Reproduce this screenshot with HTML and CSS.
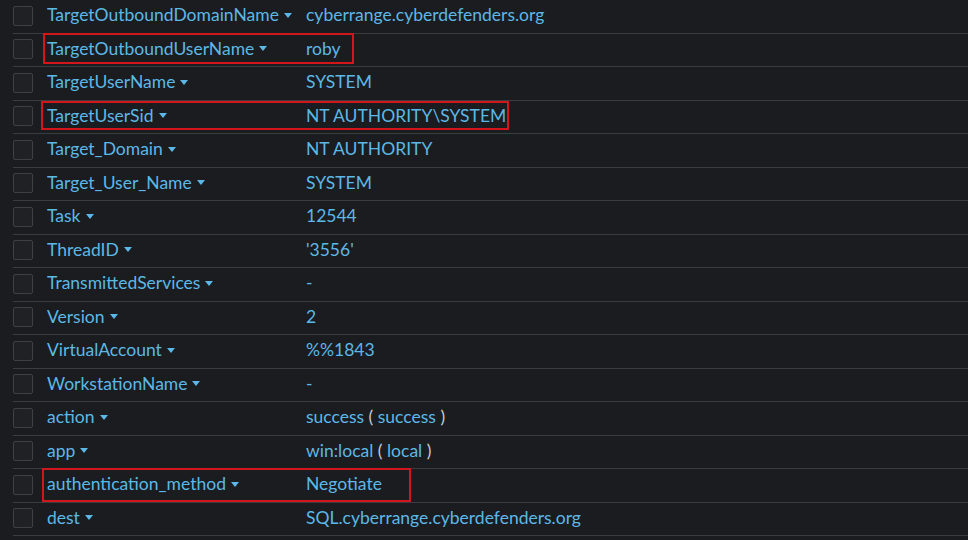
FILE: index.html
```html
<!DOCTYPE html>
<html>
<head>
<meta charset="utf-8">
<link rel="stylesheet" href="styles.css">
</head>
<body>
<div class="fields">
  <div class="row"><span class="cb"></span><span class="key">TargetOutboundDomainName<i class="caret"></i></span><span class="val">cyberrange.cyberdefenders.org</span></div>
  <div class="row"><span class="cb"></span><span class="key">TargetOutboundUserName<i class="caret"></i></span><span class="val">roby</span></div>
  <div class="row"><span class="cb"></span><span class="key">TargetUserName<i class="caret"></i></span><span class="val">SYSTEM</span></div>
  <div class="row"><span class="cb"></span><span class="key">TargetUserSid<i class="caret"></i></span><span class="val">NT AUTHORITY\SYSTEM</span></div>
  <div class="row"><span class="cb"></span><span class="key">Target_Domain<i class="caret"></i></span><span class="val">NT AUTHORITY</span></div>
  <div class="row"><span class="cb"></span><span class="key">Target_User_Name<i class="caret"></i></span><span class="val">SYSTEM</span></div>
  <div class="row"><span class="cb"></span><span class="key">Task<i class="caret"></i></span><span class="val">12544</span></div>
  <div class="row"><span class="cb"></span><span class="key">ThreadID<i class="caret"></i></span><span class="val">'3556'</span></div>
  <div class="row"><span class="cb"></span><span class="key">TransmittedServices<i class="caret"></i></span><span class="val">-</span></div>
  <div class="row"><span class="cb"></span><span class="key">Version<i class="caret"></i></span><span class="val">2</span></div>
  <div class="row"><span class="cb"></span><span class="key">VirtualAccount<i class="caret"></i></span><span class="val">%%1843</span></div>
  <div class="row"><span class="cb"></span><span class="key">WorkstationName<i class="caret"></i></span><span class="val">-</span></div>
  <div class="row"><span class="cb"></span><span class="key">action<i class="caret"></i></span><span class="val">success <span class="paren">(</span> success <span class="paren">)</span></span></div>
  <div class="row"><span class="cb"></span><span class="key">app<i class="caret"></i></span><span class="val">win:local <span class="paren">(</span> local <span class="paren">)</span></span></div>
  <div class="row"><span class="cb"></span><span class="key">authentication_method<i class="caret"></i></span><span class="val">Negotiate</span></div>
  <div class="row"><span class="cb"></span><span class="key">dest<i class="caret"></i></span><span class="val">SQL.cyberrange.cyberdefenders.org</span></div>
  <div class="mark mark-user"></div>
  <div class="mark mark-sid"></div>
  <div class="mark mark-auth"></div>
</div>
</body>
</html>
```
FILE: styles.css
```css
html, body {
  margin: 0;
  padding: 0;
  background: #1b1c1f;
  overflow: hidden;
}
body {
  width: 968px;
  height: 540px;
  font-family: "Lato", "Open Sans", sans-serif;
  font-size: 17.5px;
  color: #5cb8e6;
}
.fields {
  position: relative;
  padding-left: 13px;
}
.row {
  box-sizing: border-box;
  height: 33.5px;
  display: flex;
  align-items: center;
  padding-bottom: 3px;
  border-bottom: 1px solid #3b3c3f;
}
.cb {
  box-sizing: border-box;
  width: 20px;
  height: 20px;
  flex: none;
  border: 1px solid #3e4045;
  border-radius: 2px;
  background: #202125;
  margin-right: 14px;
  margin-top: 2px;
}
.key {
  width: 259px;
  flex: none;
  white-space: nowrap;
  display: flex;
  align-items: center;
}
.caret {
  display: inline-block;
  width: 0;
  height: 0;
  border-left: 4.5px solid transparent;
  border-right: 4.5px solid transparent;
  border-top: 5.5px solid #5cb8e6;
  margin-left: 5px;
  margin-top: 1px;
}
.val {
  white-space: nowrap;
}
.paren {
  color: #c6ccd3;
}
.mark {
  position: absolute;
  box-sizing: border-box;
  border: 2px solid #d3161c;
}
.mark-user { left: 43px; top: 33px; width: 311px; height: 31px; }
.mark-sid { left: 41px; top: 101px; width: 468px; height: 29px; }
.mark-auth { left: 42px; top: 468px; width: 369px; height: 34px; }
```
